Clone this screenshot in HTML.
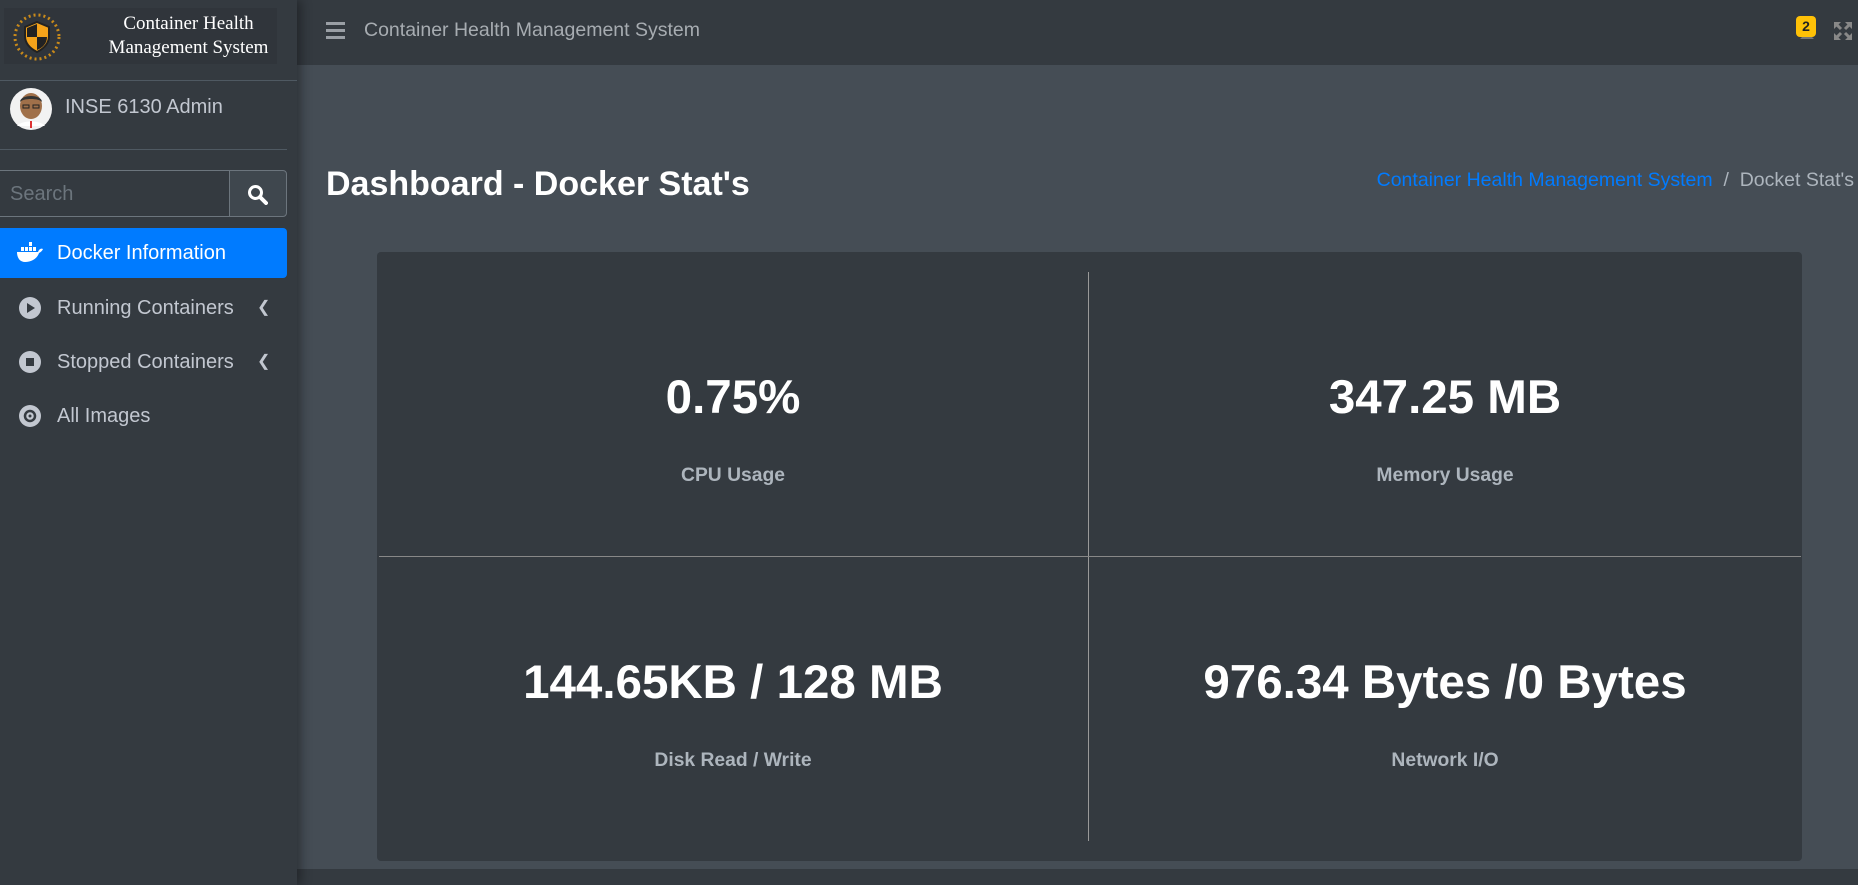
<!DOCTYPE html>
<html><head><meta charset="utf-8"><style>
*{margin:0;padding:0;box-sizing:border-box}
body{width:1858px;height:885px;overflow:hidden;background:#454d55;font-family:"Liberation Sans",sans-serif;position:relative}
.sb{position:absolute;left:0;top:0;width:297px;height:885px;background:#343a40;box-shadow:4px 0 10px rgba(0,0,0,.35);z-index:2}
.logo{position:absolute;left:4px;top:8px;width:273px;height:56px;background:#30353b}
.logo .t{position:absolute;left:92px;top:4px;width:185px;text-align:center;font-family:"Liberation Serif",serif;color:#fff;font-size:19px;line-height:24px}
.hr{position:absolute;left:0;height:1px;background:#4f5962}
.nav{position:absolute;left:297px;top:0;right:0;height:65px;background:#343a40}
.item{position:absolute;left:0;width:287px;height:50px;color:#c2c7d0;font-size:20px;line-height:50px;padding-left:57px}
.item svg{position:absolute;left:19px;top:14px}
.chev{position:absolute;left:257px;top:0;font-size:16px;color:#c2c7d0}
.card{position:absolute;left:377px;top:252px;width:1425px;height:609px;background:#343a40;border-radius:4px}
.num{position:absolute;width:712px;text-align:center;color:#fff;font-size:47.5px;font-weight:bold}
.lbl{position:absolute;width:712px;text-align:center;color:#adb5bd;font-size:19.3px;font-weight:bold}
</style></head><body>
<div class="nav">
 <svg style="position:absolute;left:29px;top:22px" width="19" height="17"><rect y="0" width="19" height="3" fill="#9a9fa5"/><rect y="7" width="19" height="3" fill="#9a9fa5"/><rect y="14" width="19" height="3" fill="#9a9fa5"/></svg>
 <div style="position:absolute;left:67px;top:19px;color:#a7acb1;font-size:19.5px">Container Health Management System</div>
 <svg style="position:absolute;left:1500px;top:26px" width="20" height="16"><path d="M10 2c-3 0-5 2-5 5v4l-2 2h14l-2-2V7c0-3-2-5-5-5z" fill="#777"/></svg>
 <div style="position:absolute;left:1499px;top:16px;width:20px;height:21px;background:#ffc107;border-radius:4px;text-align:center;font-size:14px;font-weight:bold;line-height:21px;color:#222">2</div>
 <svg style="position:absolute;left:1536px;top:21px" width="20" height="20" viewBox="0 0 20 20"><g stroke="#888" stroke-width="3" fill="none"><path d="M3 3l5 5M17 3l-5 5M3 17l5-5M17 17l-5-5"/></g><g fill="#888"><path d="M1 1h7l-7 7zM19 1h-7l7 7zM1 19h7l-7-7zM19 19h-7l7-7z"/></g></svg>
</div>
<div style="position:absolute;left:297px;right:0;top:869px;height:16px;background:#343a40"></div>
<div class="sb">
 <div class="logo">
  <svg style="position:absolute;left:8px;top:4px" width="50" height="50" viewBox="0 0 50 50"><circle cx="25" cy="25" r="22" fill="none" stroke="#c98a1a" stroke-width="3" stroke-dasharray="2 3"/><path d="M25 10l12 5v9c0 8-6 13-12 16-6-3-12-8-12-16v-9z" fill="#f5a31a" stroke="#222" stroke-width="2"/><path d="M25 12v13h-10v-9zM25 25h10c0 7-5 11-10 13z" fill="#222"/></svg>
  <div class="t">Container Health<br>Management System</div>
 </div>
 <div class="hr" style="top:80px;width:297px"></div>
 <svg style="position:absolute;left:10px;top:88px" width="42" height="42" viewBox="0 0 42 42"><circle cx="21" cy="21" r="21" fill="#f2f2f2"/><ellipse cx="21" cy="18" rx="11" ry="13" fill="#a0704a"/><path d="M10 14c0-8 22-8 22 0c-3-4-19-4-22 0z" fill="#333"/><rect x="13" y="17" width="6" height="3" fill="none" stroke="#222"/><rect x="23" y="17" width="6" height="3" fill="none" stroke="#222"/><path d="M7 38c4-6 24-6 28 0" fill="#fff"/><path d="M20 33h2v7h-2z" fill="#d33"/></svg>
 <div style="position:absolute;left:65px;top:96px;color:#c2c7d0;font-size:20px">INSE 6130 Admin</div>
 <div class="hr" style="top:149px;width:287px"></div>
 <div style="position:absolute;left:0;top:170px;width:230px;height:47px;border:1px solid #6c757d;border-left:none;background:#343a40;color:#6c757d;font-size:20px;line-height:47px;padding-left:10px">Search</div>
 <div style="position:absolute;left:229px;top:170px;width:58px;height:47px;border:1px solid #6c757d;border-radius:0 4px 4px 0;background:#3f474e"></div>
 <svg style="position:absolute;left:247px;top:184px" width="21" height="21" viewBox="0 0 21 21"><circle cx="8.5" cy="8.5" r="6" fill="none" stroke="#fff" stroke-width="3"/><path d="M13 13l6 6" stroke="#fff" stroke-width="4" stroke-linecap="round"/></svg>
 <div class="item" style="top:228px;background:#007bff;color:#fff;border-radius:0 4px 4px 0">Docker Information
  <svg width="28" height="22" viewBox="0 0 28 22" style="left:16px"><path d="M1 10h21c1-3 3-4 5-3-1 2-2 3-4 4-2 6-8 9-14 9-5 0-8-4-8-10z" fill="#fff"/><g fill="#fff"><rect x="5" y="5" width="3" height="4"/><rect x="9" y="5" width="3" height="4"/><rect x="13" y="5" width="3" height="4"/><rect x="13" y="0" width="3" height="4"/><rect x="17" y="5" width="3" height="4"/></g></svg>
 </div>
 <div class="item" style="top:283px">Running Containers<span class="chev">&#10094;</span>
  <svg width="22" height="22"><circle cx="11" cy="11" r="11" fill="#c2c7d0"/><path d="M8 6l8 5-8 5z" fill="#343a40"/></svg></div>
 <div class="item" style="top:337px">Stopped Containers<span class="chev">&#10094;</span>
  <svg width="22" height="22"><circle cx="11" cy="11" r="11" fill="#c2c7d0"/><rect x="7" y="7" width="8" height="8" fill="#343a40"/></svg></div>
 <div class="item" style="top:391px">All Images
  <svg width="22" height="22"><circle cx="11" cy="11" r="11" fill="#c2c7d0"/><circle cx="11" cy="11" r="5" fill="none" stroke="#343a40" stroke-width="2.5"/><circle cx="11" cy="11" r="1.5" fill="#343a40"/></svg></div>
</div>
<div style="position:absolute;left:326px;top:165px;color:#fff;font-size:34px;font-weight:bold">Dashboard - Docker Stat's</div>
<div style="position:absolute;right:4px;top:169px;font-size:19.5px;color:#adb5bd"><span style="color:#007bff">Container Health Management System</span>&nbsp;&nbsp;/&nbsp;&nbsp;Docket Stat's</div>
<div class="card">
 <div style="position:absolute;left:711px;top:20px;width:1px;height:569px;background:#999"></div>
 <div style="position:absolute;left:2px;top:304px;width:1422px;height:1px;background:#888"></div>
 <div class="num" style="left:0;top:118px">0.75%</div>
 <div class="lbl" style="left:0;top:213px">CPU Usage</div>
 <div class="num" style="left:712px;top:118px">347.25 MB</div>
 <div class="lbl" style="left:712px;top:213px">Memory Usage</div>
 <div class="num" style="left:0;top:403px">144.65KB / 128 MB</div>
 <div class="lbl" style="left:0;top:498px">Disk Read / Write</div>
 <div class="num" style="left:712px;top:403px">976.34 Bytes /0 Bytes</div>
 <div class="lbl" style="left:712px;top:498px">Network I/O</div>
</div>
</body></html>
